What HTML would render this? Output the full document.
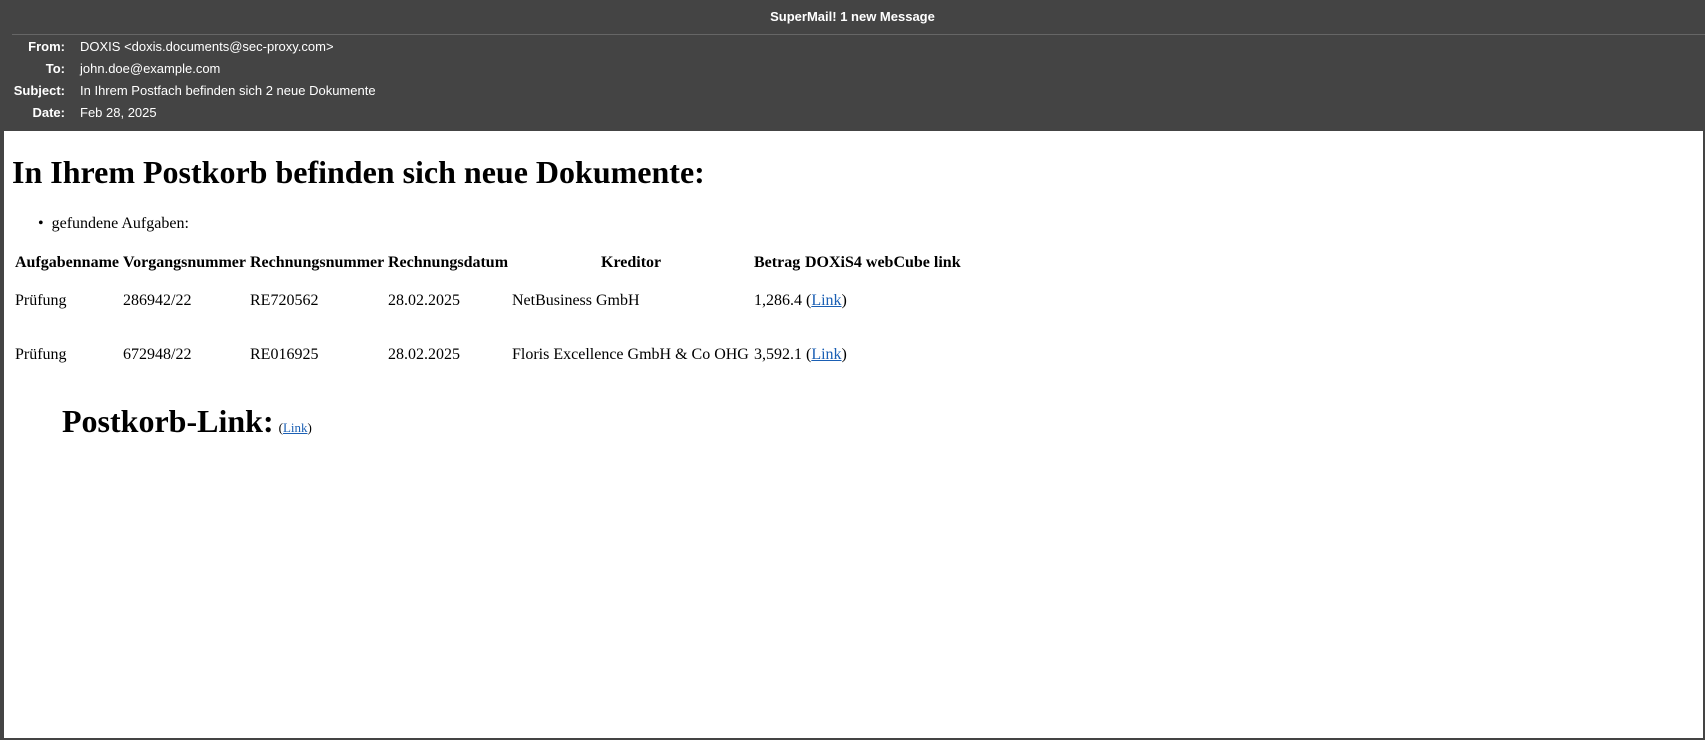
<!DOCTYPE html>
<html><head><meta charset="utf-8"><style>
html,body{margin:0;padding:0;width:1705px;height:740px;overflow:hidden;background:#444;}
.hdr{position:absolute;left:0;top:0;width:1705px;height:131px;background:#444;color:#fff;font-family:"Liberation Sans",Arial,sans-serif;font-size:13px;}
.title{position:absolute;top:9px;left:0;width:1705px;text-align:center;font-weight:bold;}
.line{position:absolute;top:34px;left:12px;right:0;height:1px;background:#666;}
.lab{position:absolute;right:1640px;font-weight:bold;white-space:nowrap;}
.val{position:absolute;left:80px;white-space:nowrap;}
.body{position:absolute;left:4px;top:131px;width:1699px;height:607px;background:#fff;font-family:"Liberation Serif","Times New Roman",serif;font-size:16px;color:#000;}
h1{position:absolute;margin:0;font-size:32px;font-weight:bold;white-space:nowrap;}
.t{position:absolute;white-space:nowrap;}
a{color:#1a5fb4;text-decoration:underline;}
b{font-weight:bold;}
</style></head><body>
<div class="hdr">
<div class="title">SuperMail! 1 new Message</div>
<div class="line"></div>
<div class="lab" style="top:39px">From:</div><div class="val" style="top:39px">DOXIS &lt;doxis.documents@sec-proxy.com&gt;</div>
<div class="lab" style="top:61px">To:</div><div class="val" style="top:61px">john.doe@example.com</div>
<div class="lab" style="top:83px">Subject:</div><div class="val" style="top:83px">In Ihrem Postfach befinden sich 2 neue Dokumente</div>
<div class="lab" style="top:105px">Date:</div><div class="val" style="top:105px">Feb 28, 2025</div>
</div>
<div class="body">
<h1 style="left:8px;top:23px">In Ihrem Postkorb befinden sich neue Dokumente:</h1>
<div class="t" style="left:34px;top:84px">•&nbsp;&nbsp;gefundene Aufgaben:</div>
<div class="t" style="left:11px;top:123px"><b>Aufgabenname</b></div>
<div class="t" style="left:119px;top:123px"><b>Vorgangsnummer</b></div>
<div class="t" style="left:246px;top:123px"><b>Rechnungsnummer</b></div>
<div class="t" style="left:384px;top:123px"><b>Rechnungsdatum</b></div>
<div class="t" style="left:597px;top:123px"><b>Kreditor</b></div>
<div class="t" style="left:750px;top:123px"><b>Betrag</b></div>
<div class="t" style="left:801px;top:123px"><b>DOXiS4 webCube link</b></div>

<div class="t" style="left:11px;top:161px">Prüfung</div>
<div class="t" style="left:119px;top:161px">286942/22</div>
<div class="t" style="left:246px;top:161px">RE720562</div>
<div class="t" style="left:384px;top:161px">28.02.2025</div>
<div class="t" style="left:508px;top:161px">NetBusiness GmbH</div>
<div class="t" style="left:750px;top:161px">1,286.4 (<a>Link</a>)</div>

<div class="t" style="left:11px;top:215px">Prüfung</div>
<div class="t" style="left:119px;top:215px">672948/22</div>
<div class="t" style="left:246px;top:215px">RE016925</div>
<div class="t" style="left:384px;top:215px">28.02.2025</div>
<div class="t" style="left:508px;top:215px">Floris Excellence GmbH &amp; Co OHG</div>
<div class="t" style="left:750px;top:215px">3,592.1 (<a>Link</a>)</div>

<h1 style="left:58px;top:272px">Postkorb-Link:<span style="font-size:13px;font-weight:normal;margin-left:5px">(<a>Link</a>)</span></h1>
</div>
</body></html>
